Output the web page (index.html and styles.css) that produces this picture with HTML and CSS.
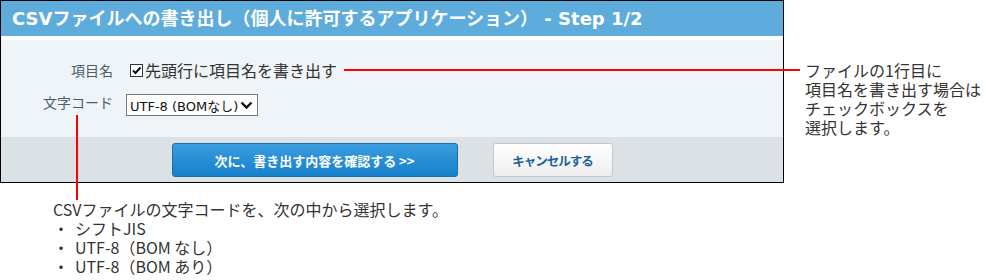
FILE: index.html
```html
<!DOCTYPE html>
<html lang="ja">
<head>
<meta charset="utf-8">
<link rel="stylesheet" href="styles.css">
</head>
<body>
<div class="canvas">
  <div class="top">
    <div class="dialog">
      <div class="title">CSVファイルへの書き出し（個人に許可するアプリケーション） - Step 1/2</div>
      <div class="body">
        <div class="row row-first">
          <div class="label">項目名</div>
          <div class="value">
            <svg class="check" width="13" height="13" viewBox="0 0 13 13"><rect x="0.5" y="0.5" width="12" height="12" fill="#fff" stroke="#333"/><path d="M3 6.5 L5.5 9 L10.5 3.5" fill="none" stroke="#111" stroke-width="2"/></svg>
            <span class="check-text">先頭行に項目名を書き出す</span>
          </div>
        </div>
        <div class="row row-second">
          <div class="label">文字コード</div>
          <div class="value">
            <div class="select"><span>UTF-8 (BOMなし)</span><svg width="13" height="9" viewBox="0 0 13 9"><path d="M1.5 1.5 L6.5 6.5 L11.5 1.5" fill="none" stroke="#111" stroke-width="2.4"/></svg></div>
          </div>
        </div>
      </div>
      <div class="footer">
        <div class="btn btn-primary">次に、書き出す内容を確認する &gt;&gt;</div>
        <div class="btn btn-cancel">キャンセルする</div>
      </div>
    </div>
    <div class="note note-right">ファイルの1行目に<br>項目名を書き出す場合は<br>チェックボックスを<br>選択します。</div>
  </div>
  <div class="note note-bottom">
    <div>CSVファイルの文字コードを、次の中から選択します。</div>
    <div class="item"><span class="dot">・</span>シフトJIS</div>
    <div class="item"><span class="dot">・</span>UTF-8（BOM なし）</div>
    <div class="item"><span class="dot">・</span>UTF-8（BOM あり）</div>
  </div>
  <div class="line line-h"></div>
  <div class="line line-v"></div>
</div>
</body>
</html>
```
FILE: styles.css
```css
html, body {
  margin: 0;
  padding: 0;
  background: #fff;
}
body {
  font-family: "DejaVu Sans", "Noto Sans CJK JP", sans-serif;
  color: #333;
}
.canvas {
  position: relative;
  width: 986px;
  height: 280px;
  overflow: hidden;
}
.top {
  display: flex;
  align-items: flex-start;
}
.dialog {
  width: 782px;
  border: 1px solid #000;
  display: flex;
  flex-direction: column;
}
.title {
  height: 35px;
  line-height: 35px;
  background: #5eacdb;
  color: #fff;
  font-weight: bold;
  font-size: 18px;
  padding-left: 11px;
  border-bottom: 4px solid #fff;
  white-space: nowrap;
}
.body {
  background: #eff4f8;
  height: 97px;
  box-sizing: border-box;
  padding-top: 20px;
}
.row {
  display: flex;
  align-items: center;
}
.row-first {
  height: 20px;
}
.row-second {
  margin-top: 14px;
  height: 22px;
}
.label {
  width: 112px;
  text-align: right;
  font-size: 14px;
  color: #4c5c6c;
  font-family: "Noto Sans CJK JP", sans-serif;
}
.row-second .label {
  position: relative;
  top: -3px;
}
.value {
  margin-left: 13px;
  display: flex;
  align-items: center;
}
.check {
  margin-left: 4px;
  margin-right: 2px;
  display: block;
}
.check-text {
  font-size: 16px;
  color: #333;
  font-family: "Noto Sans CJK JP", sans-serif;
}
.select {
  width: 132px;
  height: 22px;
  box-sizing: border-box;
  border: 1px solid #767676;
  background: #fff;
  display: flex;
  align-items: center;
  justify-content: space-between;
  padding: 0 4px 0 3px;
  font-size: 13px;
  color: #111;
}
.footer {
  background: #dce1e5;
  height: 45px;
  box-sizing: border-box;
  padding-top: 6px;
  display: flex;
  justify-content: center;
  align-items: flex-start;
  gap: 35px;
}
.btn {
  height: 34px;
  box-sizing: border-box;
  border-radius: 3px;
  display: flex;
  align-items: center;
  justify-content: center;
  font-weight: bold;
  font-family: "Noto Sans CJK JP", sans-serif;
}
.btn-primary {
  width: 286px;
  font-size: 13px;
  background: linear-gradient(#3a9ddf, #1580cb);
  border: 1px solid #1a6eac;
  color: #fff;
}
.btn-cancel {
  width: 120px;
  font-size: 12.5px;
  letter-spacing: -1px;
  background: linear-gradient(#ffffff, #eeeeee);
  border: 1px solid #c3c7cb;
  color: #1d5f9e;
}
.note {
  font-family: "Noto Sans CJK JP", sans-serif;
  font-size: 16px;
  line-height: 19px;
  color: #333;
  white-space: nowrap;
}
.note-right {
  margin-left: 21px;
  margin-top: 61px;
}
.note-bottom {
  margin-left: 53px;
  margin-top: 17px;
}
.item {
  display: flex;
}
.dot {
  width: 22px;
}
.line {
  position: absolute;
  background: #f00;
}
.line-h {
  left: 344px;
  top: 69px;
  width: 456px;
  height: 2px;
}
.line-v {
  left: 76px;
  top: 115px;
  width: 2px;
  height: 85px;
}
```
